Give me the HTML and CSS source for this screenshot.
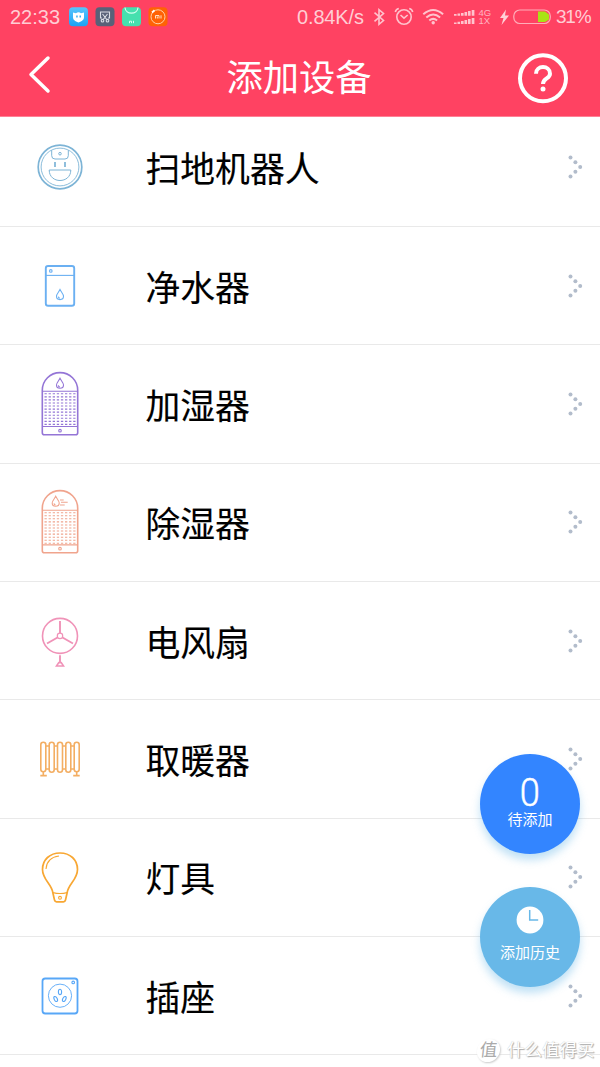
FILE: index.html
```html
<!DOCTYPE html>
<html lang="zh-CN">
<head>
<meta charset="utf-8">
<title>添加设备</title>
<link rel="stylesheet" href="styles.css">
</head>
<body>
<div class="app">
  <header class="header">
    <div class="status">
      <span class="time">22:33</span>
      <svg class="apps" width="100" height="20" viewBox="0 0 100 20">
        <defs><linearGradient id="sky" x1="0" y1="0" x2="0" y2="1"><stop offset="0" stop-color="#58c4fb"/><stop offset="1" stop-color="#1aa3f5"/></linearGradient></defs>
        <rect x="0" y="0.3" width="19" height="19" rx="4" fill="url(#sky)"/>
        <path d="M4 5.500l3 .7q2.500-2 5 0l3-.7v4.500c0 3-2 4-5.500 5.500C6 14 4 13 4 10z" fill="#fff"/>
        <path d="M7.200 8.500h1.500v2H7.200zM10.500 8.500h1.500v2h-1.500z" fill="#39aef0"/>
        <rect x="26.500" y="0.300" width="19" height="19" rx="4" fill="#596178"/>
        <g fill="none" stroke="#d9dce4" stroke-width="1.100"><path d="M33 11h-1.500V5h9v6H39M33.500 7l4.300 5.500M38.500 7l-4.300 5.500"/><circle cx="33.500" cy="13.700" r="1.300"/><circle cx="38.500" cy="13.700" r="1.300"/></g>
        <rect x="53" y="0.300" width="19" height="19" rx="4" fill="#45e0ae"/>
        <path d="M56 .5c.5 7.500 12.500 7.500 13 0" fill="none" stroke="#d4fff0" stroke-width="1.200"/>
        <path d="M60.500 16.200v-2h2v2M64.500 13.800v2.400" fill="none" stroke="#d4fff0"/>
        <rect x="79.500" y="0.300" width="19" height="19" rx="4" fill="#ff6205"/>
        <circle cx="89" cy="9.800" r="7" fill="none" stroke="#ffd1a8" stroke-width="1"/>
        <path d="M83 5.500l2.500-2.200" stroke="#fff" stroke-width="1.800"/>
        <path d="M86.500 11.500v-3h3.500v3M88.300 9.500v2M92 8.300v3.200" fill="none" stroke="#ffe0c5"/>
      </svg>
      <span class="speed">0.84K/s</span>
      <svg class="signals" width="181" height="20" viewBox="371 7 181 20">
        <g fill="none" stroke="#ffc3cd" stroke-width="1.600">
          <path d="M374.500 12.700l9 7.800-4.500 3.800V9.700l4.500 3.800-9 7.800"/>
          <circle cx="404" cy="17" r="7.200"/><path d="M400.500 15l3.500 3.200 3.700-3.200M395.300 12q.5-2.800 3.500-3.500M412.700 12q-.5-2.800-3.500-3.500"/>
          <path d="M423.300 14.200q9.900-8.500 19.800 0M426.300 17.500q6.900-6 13.800 0M429.300 20.500q3.900-3.200 7.800 0" stroke-width="2"/>
        </g>
        <circle cx="433.200" cy="22.800" r="1.700" fill="#ffc3cd"/>
        <path fill="#ffc3cd" d="M454 14h2.600v1.800H454zM457.500 13.500h2.600v2.300h-2.600zM461 13h2.600v2.800H461zM464.500 12h2.600v3.800h-2.600zM468 11h2.600v4.800H468zM471.700 10h2.700v5.800h-2.700zM454 22.500h2.600V24H454zM457.500 21.800h2.600V24h-2.600zM461 21h2.600v3H461zM464.500 20h2.600v4h-2.600zM468 19h2.600v5H468zM471.700 18h2.700v6h-2.700z"/>
        <text class="net" x="478.500" y="16">4G</text><text class="net" x="478.500" y="24.300">1X</text>
        <path d="M506 9.500l-6 8.500h3.500l-2 7 7.500-9.500h-4z" fill="#ffd0d6"/>
        <rect x="513.800" y="10" width="36.500" height="13.500" rx="6" fill="none" stroke="#ffadb9" stroke-width="1.200"/>
        <path d="M538 11.500h7l4 3v5l-4 2.500h-7z" fill="#a9e315"/>
      </svg>
      <span class="percent">31%</span>
    </div>
    <div class="bar">
      <svg width="40" height="48" viewBox="20 52 40 48"><path d="M48 58L31 74.500 48 91" fill="none" stroke="#fff" stroke-width="3.500" stroke-linecap="round" stroke-linejoin="round"/></svg>
      <h1 class="title">添加设备</h1>
      <svg width="52" height="52" viewBox="517 52 52 52"><circle cx="543" cy="78.300" r="23" fill="none" stroke="#fff" stroke-width="4"/><path d="M536 73.700c0-8.800 14-8.800 14 0 0 5-7 4.500-7 10.200" fill="none" stroke="#fff" stroke-width="4"/><circle cx="543" cy="89" r="2.500" fill="#fff"/></svg>
    </div>
  </header>

  <svg class="defs" width="0" height="0">
    <defs>
      <g id="more"><circle cx="-4.500" cy="-9.500" r="2"/><circle cx=".400" cy="-4.800" r="2"/><circle cx="5.200" cy="0" r="2"/><circle cx=".400" cy="4.800" r="2"/><circle cx="-4.500" cy="9.500" r="2"/></g>
      <path id="grid" d="M-15.500 0h31M-15.500 3.060h31M-15.500 6.120h31M-15.500 9.180h31M-15.500 12.240h31M-15.500 15.300h31M-15.500 18.360h31M-15.500 21.420h31M-15.500 24.480h31M-15.500 27.540h31M-15.500 30.600h31"/>
      <path id="drop" d="M0-5C-1.500-2-3.500-.5-3.500 1.700A3.500 3.300 0 0 0 3.500 1.700C3.500-.5 1.500-2 0-5zM-1.700 2q.3 1.400 1.500 1.700"/>
    </defs>
  </svg>

  <main class="list">
    <div class="row">
      <svg class="icon robot" viewBox="-40 -40 80 80"><circle r="21.800" stroke-width="1.700"/><circle r="18.900" stroke-width=".9"/><g stroke-width="1"><path d="M-8.300-16.800v5.500q0 3.300 3.300 3.300H5q3.300 0 3.300-3.300v-5.500M-10.800 3h21.600C10.800 17-10.800 17-10.800 3z"/><circle cy="-13.300" r="1.300"/><path d="M-5-5V0M5-5V0" stroke-width="1.700"/></g></svg>
      <span class="name">扫地机器人</span><svg class="more" viewBox="-10 -15 20 30"><use href="#more"/></svg>
    </div>
    <div class="row">
      <svg class="icon water" viewBox="-40 -40 80 80"><rect x="-14.200" y="-20" width="28.400" height="39.700" rx="2.300" stroke-width="1.900"/><path d="M-14-10.600h28" stroke-width="1.100"/><circle cx="-9.200" cy="-15.100" r="1.300"/><use href="#drop" y="8.600"/></svg>
      <span class="name">净水器</span><svg class="more" viewBox="-10 -15 20 30"><use href="#more"/></svg>
    </div>
    <div class="row">
      <svg class="icon humid" viewBox="-40 -40 80 80"><path d="M-17.700-13.700a17.700 17.700 0 0 1 35.400 0V28.800q0 2-2 2h-31.400q-2 0-2-2z" stroke-width="1.600"/><path d="M-17.500-12.700h35M-17.500 22.500h35"/><use href="#grid" y="-10.200" stroke-dasharray="2.300 1.800"/><circle cy="26.700" r="1.300"/><use href="#drop" y="-20.700"/></svg>
      <span class="name">加湿器</span><svg class="more" viewBox="-10 -15 20 30"><use href="#more"/></svg>
    </div>
    <div class="row">
      <svg class="icon dry" viewBox="-40 -40 80 80"><path d="M-17.700-13.700a17.700 17.700 0 0 1 35.400 0V28.800q0 2-2 2h-31.400q-2 0-2-2z" stroke-width="1.600"/><path d="M-17.500-11.800h35M-17.500 22.900h35"/><use href="#grid" y="-9.300" stroke-dasharray="2.300 1.800"/><circle cy="26.700" r="1.300"/><use href="#drop" x="-4.300" y="-20.700"/><path d="M0-22h3.700M1-19.700h6.700M0-17h4.700"/></svg>
      <span class="name">除湿器</span><svg class="more" viewBox="-10 -15 20 30"><use href="#more"/></svg>
    </div>
    <div class="row">
      <svg class="icon fan" viewBox="-40 -40 80 80"><circle cy="-5.100" r="17.500" stroke-width="1.600"/><circle cy="-5.100" r="2.700" stroke-width="1.200"/><path d="M0-20v12M-2.500-3.500l-10.500 6M2.500-3.500l10.500 6M0 14.200v7" stroke-width="1.900"/><path d="M-3.500 25L-1.200 21.600h2.400L3.500 25z" stroke-width="1.600"/></svg>
      <span class="name">电风扇</span><svg class="more" viewBox="-10 -15 20 30"><use href="#more"/></svg>
    </div>
    <div class="row">
      <svg class="icon heater" viewBox="-40 -40 80 80"><g stroke-width="1.600"><rect x="-19.200" y="-16.700" width="5" height="29.400" rx="2.500"/><rect x="-10.800" y="-16.700" width="5" height="30" rx="2.500"/><rect x="-2.500" y="-16.700" width="5" height="30" rx="2.500"/><rect x="5.800" y="-16.700" width="5" height="30" rx="2.500"/><rect x="14.200" y="-16.700" width="5" height="29.400" rx="2.500"/><path d="M-14-13h3M-5.600-13h3M2.700-13h3M11-13h3M-14 10h3M-5.600 10h3M2.700 10h3M11 10h3M-16.700 12.800v3.500M16.700 12.800v3.500M-19.700 16.600h6.500M13.200 16.600h6.500"/></g></svg>
      <span class="name">取暖器</span><svg class="more" viewBox="-10 -15 20 30"><use href="#more"/></svg>
    </div>
    <div class="row">
      <svg class="icon bulb" viewBox="-40 -40 80 80"><path d="M-7.200 15.500C-8.500 7-17.500 2.500-17.500-7.500-17.500-17.500-10-24-0-24S17.500-17.500 17.500-7.500C17.500 2.500 8.500 7 7.200 15.500L5.500 23q-.4 1.800-2 1.800h-7q-1.600 0-2-1.800z" stroke-width="1.700"/><path d="M-7 15.600Q0 17.500 7 15.600M-14-8C-13.500-15-9-20-1-21"/><circle cy="20.800" r="1.400"/></svg>
      <span class="name">灯具</span><svg class="more" viewBox="-10 -15 20 30"><use href="#more"/></svg>
    </div>
    <div class="row">
      <svg class="icon socket" viewBox="-40 -40 80 80"><rect x="-17.500" y="-17.500" width="35" height="35" rx="2.700" stroke-width="1.800"/><circle cy="-.3" r="11.600" stroke-width=".9"/><circle cx="13.200" cy="-13.600" r="1.300"/><ellipse cy="-4" rx="1.600" ry="2.700"/><ellipse rx="1.500" ry="2.700" transform="translate(-4.300 3) rotate(-27)"/><ellipse rx="1.500" ry="2.700" transform="translate(4.300 3) rotate(27)"/></svg>
      <span class="name">插座</span><svg class="more" viewBox="-10 -15 20 30"><use href="#more"/></svg>
    </div>
  </main>

  <div class="floats">
    <div class="fab pending"><span class="count">0</span><span class="label">待添加</span></div>
    <div class="fab history"><svg width="28" height="28" viewBox="0 0 28 28"><circle cx="14" cy="14" r="13.400" fill="#fff"/><path d="M13.700 4v10h8.500" fill="none" stroke="#68b8e8" stroke-width="1.500"/></svg><span class="label">添加历史</span></div>
  </div>
  <div class="watermark"><span class="seal">值</span><span>什么值得买</span></div>
</div>
</body>
</html>
```
FILE: styles.css
```css
* { box-sizing: border-box; }
body { margin: 0; background: #fff; font-family: Roboto, "Noto Sans CJK SC", sans-serif; }
.app { position: relative; width: 600px; height: 1067px; overflow: hidden; background: #fff; }
.header { position: relative; z-index: 1; height: 117px; background: #ff4262; border-bottom: 1px solid #ff8095; color: #fff; }
.status { display: flex; align-items: center; height: 34px; padding: 0 10px 0 10px; font-family: "Liberation Sans", sans-serif; font-size: 20px; color: #ffcdd4; }
.time { width: 59px; flex: none; }
.apps { flex: none; margin-top: -1px; }
.speed { flex: none; margin-left: 128px; width: 74px; white-space: nowrap; letter-spacing: -.15px; }
.signals { flex: none; }
.net { font: 9.500px "Liberation Sans", sans-serif; fill: #ffb3c0; }
.percent { margin-left: 4px; font-size: 19px; letter-spacing: -1.200px; }
.bar { display: flex; justify-content: space-between; align-items: flex-start; padding: 18px 31px 0 20px; }
.title { margin: 1px 0 0 21px; font-size: 36.300px; line-height: 52px; font-weight: 400; }
.defs { display: block; }
.list { margin-top: -8.500px; }
.row { display: flex; align-items: center; height: 118.350px; padding: 0 15px 0 20px; border-bottom: 1.500px solid #e9e9e9; }
.icon { flex: none; width: 80px; height: 80px; fill: none; stroke-width: 1.100; }
.robot { stroke: #7db4d6; }
.water { stroke: #6bb0f2; }
.humid { stroke: #9475d6; }
.dry { stroke: #f0a48d; }
.fan { stroke: #f093b8; }
.heater { stroke: #f3ae63; }
.bulb { stroke: #f8a733; }
.socket { stroke: #58a7f7; }
.name { flex: 1; margin-left: 45.500px; padding-top: 6px; font-size: 34.800px; line-height: 50px; color: #000; -webkit-text-stroke: .15px #000; }
.more { width: 20px; height: 30px; fill: #b2bccb; }
.floats { position: absolute; z-index: 2; left: 480px; top: 753.500px; display: flex; flex-direction: column; gap: 33px; }
.fab { display: flex; flex-direction: column; align-items: center; width: 100px; height: 100px; border-radius: 50%; color: #fff; box-shadow: 0 6px 9px rgba(104, 184, 232, .42); }
.pending { padding-top: 18px; background: #3385ff; }
.history { padding-top: 19px; background: #68b8e8; }
.count { height: 39px; font-size: 39px; line-height: 42px; font-weight: 300; -webkit-text-stroke: .5px #fff; transform: scaleX(.93); }
.label { font-size: 15px; line-height: 18px; }
.history .label { margin-top: 10px; }
.watermark { position: absolute; z-index: 2; left: 477px; top: 1038px; display: flex; align-items: center; gap: 7px; font-size: 17.500px; line-height: 25px; color: #fff; white-space: nowrap; text-shadow: 1px 1px 1px #aaa, 0 0 1px #bbb; }
.seal { width: 23px; height: 23px; border-radius: 50%; background: #fff; box-shadow: 1px 1px 2px #ccc; text-align: center; line-height: 22px; color: #aaa; text-shadow: none; transform: skewX(-6deg); }
```
